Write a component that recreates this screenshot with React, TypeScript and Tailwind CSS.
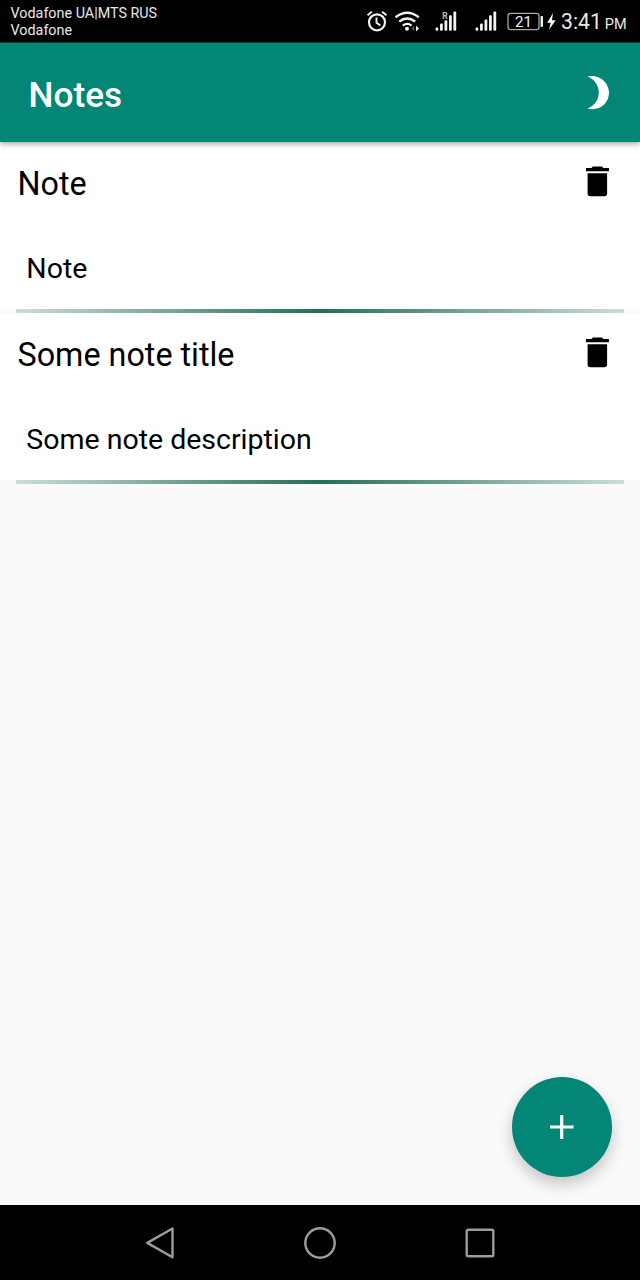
import React from "react";

type Note = { title: string; description: string };

const notes: Note[] = [
  { title: "Note", description: "Note" },
  { title: "Some note title", description: "Some note description" },
];

function AlarmIcon() {
  return (
    <svg className="h-[42px] w-[22px]" viewBox="366 0 22 42" fill="none" stroke="#f0f0f0">
      <circle cx="377" cy="22.3" r="8" strokeWidth="2.2" />
      <path d="M376.5 17.5v5.3l3.8 2.6" strokeWidth="1.9" />
      <path d="M367.6 15.2l4.2-3.5M386.4 15.2l-4.2-3.5" strokeWidth="1.9" />
    </svg>
  );
}

function WifiIcon() {
  return (
    <svg className="ml-[6px] h-[42px] w-[27px]" viewBox="394 0 27 42" fill="none" stroke="#f2f2f2">
      <path d="M395.6 17.2q11.6-8.8 23.2 0" strokeWidth="2.4" />
      <path d="M399.2 21.6q8-6.2 16 0" strokeWidth="2.4" />
      <path d="M402.8 25.6q4.4-3.4 8.8 0" strokeWidth="2.2" />
      <circle cx="407" cy="28.8" r="2" fill="#f2f2f2" stroke="none" />
      <path d="M414.3 26v5l-3-2.5z" fill="#555" stroke="none" />
      <path d="M416 25.6v5.8l3-2.9z" fill="#eee" stroke="none" />
    </svg>
  );
}

function SignalIcon({ roaming = false }: { roaming?: boolean }) {
  return (
    <svg className="h-[42px] w-[22px]" viewBox="435 0 22 42" fill="#f2f2f2">
      <rect x="435.5" y="27.6" width="2.8" height="3.2" rx="1" />
      <rect x="440" y="23.6" width="2.8" height="7.2" rx="1" />
      <rect x="444.5" y={roaming ? "20.2" : "19.6"} width="2.8" height={roaming ? "10.6" : "11.2"} rx="1" />
      <rect x="449" y="15.2" width="2.8" height="15.6" rx="1" />
      <rect x="453.4" y="11.6" width="2.8" height="19.2" rx="1" />
      {roaming && (
        <text x="442.2" y="18.6" fontSize="8.5" fontWeight="700" fill="#bdbdbd" fontFamily="Roboto, sans-serif">
          R
        </text>
      )}
    </svg>
  );
}

function BatteryIcon() {
  return (
    <svg className="ml-[9px] h-[42px] w-[37px]" viewBox="506 0 37 42">
      <rect x="508" y="13.4" width="31" height="16.2" rx="2.6" fill="none" stroke="#a6a6a6" strokeWidth="1.3" />
      <rect x="540.6" y="16" width="2.4" height="11" rx="0.8" fill="#f2f2f2" />
      <text x="515" y="27.4" fontSize="15.5" fill="#f0f0f0" fontFamily="Roboto, sans-serif" textLength="17" lengthAdjust="spacingAndGlyphs">
        21
      </text>
    </svg>
  );
}

function BoltIcon() {
  return (
    <svg className="ml-[4px] h-[42px] w-[9px]" viewBox="547 0 9 42" fill="#f8f8f8">
      <path d="M553 13l-5.8 9.8h3.5l-1.7 7 6.7-9.5h-3.7z" />
    </svg>
  );
}

function MoonIcon() {
  return (
    <svg className="h-[34px] w-[23px]" viewBox="587 76 23 34" fill="#fff">
      <path d="M587.6 76.4C599 73.6 609 82.5 609 92.7C609 103.5 599 111.5 587.6 108.5C594.8 105.5 598.8 99.5 598.8 92.4C598.8 85.5 594.8 79.5 587.6 76.4z" />
    </svg>
  );
}

function TrashIcon() {
  return (
    <svg className="mt-6 h-[31px] w-[23px]" viewBox="586 166 23 31" fill="#000">
      <path d="M586 168.1h5.4l1.5-1.6h9l1.5 1.6h5.6v3.1h-23z" />
      <path d="M587.6 173.2h19.5v20.3a2.8 2.8 0 0 1-2.8 2.8h-13.9a2.8 2.8 0 0 1-2.8-2.8z" />
    </svg>
  );
}

function StatusBar() {
  return (
    <div className="flex h-[42px] shrink-0 justify-between bg-black text-[#e8e8e8]">
      <div className="pt-[5px] pl-[10.5px] text-[14.35px] leading-[17px]">
        <div>Vodafone UA|MTS RUS</div>
        <div>Vodafone</div>
      </div>
      <div className="flex w-[274px] items-start">
        <AlarmIcon />
        <WifiIcon />
        <div className="ml-[14px] flex gap-[18px]">
          <SignalIcon roaming />
          <SignalIcon />
        </div>
        <BatteryIcon />
        <BoltIcon />
        <div className="flex items-baseline pt-[8px] pl-[5px] leading-[28px]">
          <span className="text-[21.2px]">3:41</span>
          <span className="ml-[3px] text-[14.5px]">PM</span>
        </div>
      </div>
    </div>
  );
}

function NoteItem({ note }: { note: Note }) {
  return (
    <article className="h-[171px]">
      <div className="h-[167px] bg-white text-black">
        <div className="flex h-[82px] items-start justify-between pr-[31px] pl-[17.5px]">
          <h2 className="pt-[22px] text-[32.3px] leading-[40px]">{note.title}</h2>
          <TrashIcon />
        </div>
        <p className="pt-[27px] pl-[26.3px] text-[28.5px] leading-[36px]">{note.description}</p>
      </div>
      <div className="mx-4 h-1 bg-[linear-gradient(90deg,#cbded5,#24704f,#cbded5)]" />
    </article>
  );
}

export default function App() {
  return (
    <div className="relative flex h-[1280px] w-[640px] flex-col overflow-hidden bg-[#fafafa] font-['Roboto',sans-serif]">
      <StatusBar />
      <header className="z-10 flex h-[100px] shrink-0 items-start justify-between border-t border-[#003d35] bg-[#038676] pr-[30px] pl-[28.5px] text-white shadow-[0_2px_5px_rgba(0,0,0,0.35)]">
        <h1 className="pt-[31px] text-[35.2px] leading-[42px] font-medium">Notes</h1>
        <div className="pt-[33px]">
          <MoonIcon />
        </div>
      </header>
      <main className="flex-1">
        {notes.map((note) => (
          <NoteItem key={note.title} note={note} />
        ))}
      </main>
      <button
        aria-label="Add note"
        className="absolute right-[28px] bottom-[103px] flex size-[100px] items-center justify-center rounded-full bg-[#038676] shadow-[0_7px_16px_rgba(0,0,0,0.22)]"
      >
        <svg className="size-6" viewBox="0 0 24 24" stroke="#fff" strokeWidth="3.2">
          <path d="M0 12h23.5M11.7 0v24" />
        </svg>
      </button>
      <nav className="flex h-[75px] shrink-0 items-center justify-center gap-[128px] bg-black">
        <svg className="size-8" viewBox="0 0 32 32" fill="none" stroke="#9c9c9c" strokeWidth="2.4" strokeLinejoin="round">
          <path d="M28.5 1.5v28.8L3.3 15.9z" />
        </svg>
        <svg className="size-8" viewBox="0 0 32 32" fill="none" stroke="#9c9c9c" strokeWidth="2.4">
          <circle cx="16" cy="16" r="14.7" />
        </svg>
        <svg className="size-8" viewBox="0 0 32 32" fill="none" stroke="#9c9c9c" strokeWidth="2.4">
          <rect x="2.7" y="2.7" width="26.6" height="26.6" rx="1.5" />
        </svg>
      </nav>
    </div>
  );
}
